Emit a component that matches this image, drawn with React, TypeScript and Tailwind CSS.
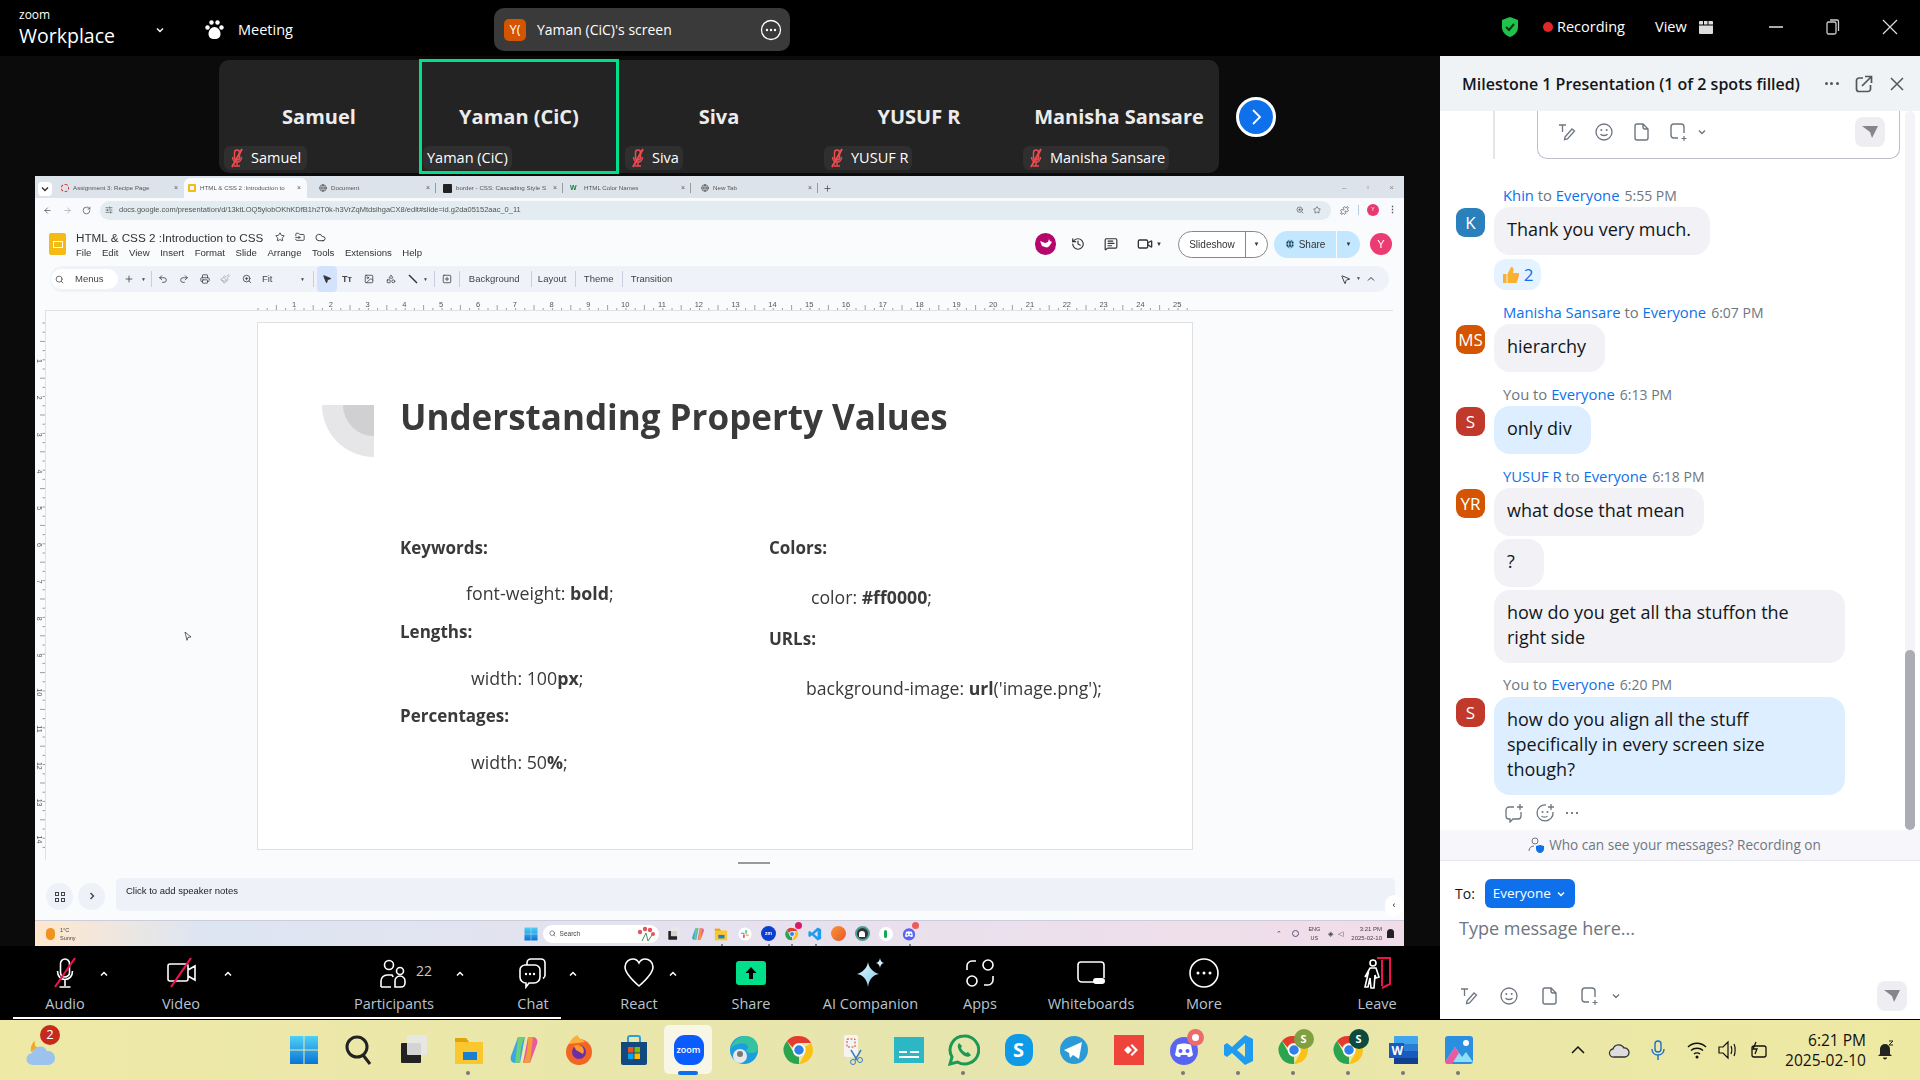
import React from 'react'
import { ArrowLeft, ArrowRight, Cloud, FolderInput, Globe, History, Image, MessageSquareText, MousePointer2, Paintbrush, Plus, Printer, Puzzle, Redo2, RotateCw, Search, Shapes, SlidersHorizontal, SquarePlus, Star, Undo2, Video, ZoomIn } from 'lucide-react'

const ui = 'font-["Open_Sans","Noto_Sans",sans-serif]'

// ---- small drawn icons ----
function Svg({ s, children, vb = '0 0 32 32' }: { s: number; children: React.ReactNode; vb?: string }) {
  return (
    <svg width={s} height={s} viewBox={vb} fill="none" className="shrink-0">
      {children}
    </svg>
  )
}

const Paw = () => (
  <Svg s={22} vb="0 0 22 22">
    <g fill="#fff">
      <circle cx="7.5" cy="3.5" r="2.2" />
      <circle cx="13.5" cy="3.5" r="2.2" />
      <circle cx="3.5" cy="8.5" r="2.2" />
      <circle cx="17.5" cy="8.5" r="2.2" />
      <path d="M10.5 8c3 0 6 3 6 7 0 3-2 5-6 5s-6-2-6-5c0-4 3-7 6-7z" />
    </g>
  </Svg>
)

const Shield = () => (
  <Svg s={22} vb="0 0 22 22">
    <path d="M11 1l8 3v7c0 5-3.5 8.5-8 10-4.5-1.5-8-5-8-10V4z" fill="#1fc24a" />
    <path d="M7 11l3 3 5-6" stroke="#06320f" strokeWidth="2" />
  </Svg>
)

const MutedMic = () => (
  <Svg s={20} vb="0 0 20 20">
    <path d="M10 2a2.5 2.5 0 012.5 2.5v5a2.5 2.5 0 01-5 0v-5A2.5 2.5 0 0110 2zM5.5 9c0 3 2 5 4.5 5s4.5-2 4.5-5M10 14v3.5M7 18h6" stroke="#ef4b4f" strokeWidth="1.5" />
    <path d="M15 1L5 19" stroke="#ef4b4f" strokeWidth="2" />
  </Svg>
)

const TextTool = () => (
  <Svg s={20} vb="0 0 20 20">
    <path d="M2 3h7M5.5 3v7" stroke="#6e7680" strokeWidth="1.3" />
    <path d="M8 15l7-8 2.5 2-7 8-3 .7z" stroke="#6e7680" strokeWidth="1.3" />
  </Svg>
)
const Smile = () => (
  <Svg s={20} vb="0 0 20 20">
    <circle cx="10" cy="10" r="8" stroke="#6e7680" strokeWidth="1.3" />
    <circle cx="7.3" cy="8" r="1" fill="#6e7680" />
    <circle cx="12.7" cy="8" r="1" fill="#6e7680" />
    <path d="M6.5 12c1 2 6 2 7 0" stroke="#6e7680" strokeWidth="1.3" />
  </Svg>
)
const FileIcon = () => (
  <Svg s={20} vb="0 0 20 20">
    <path d="M6 2h6l5 5v9a2 2 0 01-2 2H6a2 2 0 01-2-2V4a2 2 0 012-2zM12 2v3a2 2 0 002 2h3" stroke="#6e7680" strokeWidth="1.4" />
  </Svg>
)
const Snip = () => (
  <Svg s={20} vb="0 0 20 20">
    <path d="M10 16H6a3 3 0 01-3-3V5a3 3 0 013-3h7a3 3 0 013 3v6" stroke="#6e7680" strokeWidth="1.4" />
    <path d="M16 14v5M13.5 16.5h5" stroke="#6e7680" strokeWidth="1.2" />
  </Svg>
)
const Caret = ({ c = '#6e7680' }: { c?: string }) => (
  <Svg s={12} vb="0 0 12 12">
    <path d="M3 4.5L6 7.5l3-3" stroke={c} strokeWidth="1.4" />
  </Svg>
)
const Up = () => (
  <Svg s={12} vb="0 0 12 12">
    <path d="M3 7.5L6 4.5l3 3" stroke="#fff" strokeWidth="1.5" />
  </Svg>
)
const Send = () => (
  <div className="flex h-[30px] w-[30px] items-center justify-center rounded-lg bg-[#eeeef2]">
    <Svg s={18} vb="0 0 18 18">
      <path d="M1 3h16l-6 12-2-6z" fill="#85858c" />
    </Svg>
  </div>
)

function ComposerTools({ gap, caretGap }: { gap: string; caretGap: string }) {
  return (
    <div className={`flex items-center ${gap}`}>
      <TextTool />
      <Smile />
      <FileIcon />
      <div className={`flex items-center ${caretGap}`}>
        <Snip />
        <Caret />
      </div>
    </div>
  )
}

// ---- top bar ----
function TopBar() {
  return (
    <div className={`flex h-14 items-center bg-black pl-[19px] pt-[3px] text-white ${ui}`}>
      <div className="-mt-[3px] flex w-[135px] flex-col">
        <span className="h-[12px] text-[12px] leading-[12px]">zoom</span>
        <span className="mt-[4px] text-[19.5px] leading-[22px]">Workplace</span>
      </div>
      <Caret c="#fff" />
      <div className="ml-[38px] flex w-[290px] items-center gap-[12px] text-[14.5px]">
        <Paw />
        <span>Meeting</span>
      </div>
      <div className="flex h-[43px] w-[296px] items-center rounded-[10px] bg-[#3a3a3a] pl-[10px] text-[14px]">
        <div className="flex h-[22px] w-[22px] items-center justify-center rounded-[5px] bg-[#d45400] text-[13px]">Y(</div>
        <span className="ml-[11px] flex-1 whitespace-nowrap">Yaman (CiC)'s screen</span>
        <Svg s={22} vb="0 0 22 22">
          <circle cx="11" cy="11" r="9.5" stroke="#fff" strokeWidth="1.3" />
          <g fill="#fff">
            <circle cx="7" cy="11" r="1.2" />
            <circle cx="11" cy="11" r="1.2" />
            <circle cx="15" cy="11" r="1.2" />
          </g>
        </Svg>
        <div className="w-2" />
      </div>
      <div className="-mt-[6px] ml-[709px] flex items-center text-[14.5px]">
        <Shield />
        <span className="ml-[22px] h-[10px] w-[10px] rounded-full bg-[#e02828]" />
        <span className="ml-[4px]">Recording</span>
        <span className="ml-[30px]">View</span>
        <div className="ml-[10px]">
          <Svg s={16} vb="0 0 16 16">
            <rect x="2" y="2" width="14" height="13" rx="1" fill="#ddd" />
            <path d="M2 6h14M6.5 2v4M11 2v4" stroke="#000" />
          </Svg>
        </div>
        <span className="ml-[56px] h-[2px] w-[14px] bg-[#aaa]" />
        <div className="ml-[41px]">
          <Svg s={18} vb="0 0 18 18">
            <rect x="3" y="4" width="9" height="12" rx="1.5" stroke="#ccc" strokeWidth="1.3" />
            <path d="M6 2h7a1.5 1.5 0 011.5 1.5V13" stroke="#ccc" strokeWidth="1.3" />
          </Svg>
        </div>
        <div className="ml-[39px]">
          <Svg s={18} vb="0 0 18 18">
            <path d="M2 2l14 14M16 2L2 16" stroke="#ddd" strokeWidth="1.2" />
          </Svg>
        </div>
      </div>
    </div>
  )
}

// ---- gallery ----
function Tile({ name, muted = true, active = false, pill }: { name: string; muted?: boolean; active?: boolean; pill: string }) {
  return (
    <div className={`relative flex w-[200px] justify-center ${active ? 'z-10 -my-px h-[115px] border-[3px] border-[#00e08a] pt-[40px]' : 'h-full pt-[42px]'}`}>
      <span className="text-[20px] font-bold leading-[30px] text-[#ececec]">{name}</span>
      <div className={`absolute flex h-[24px] items-center gap-[4px] rounded-[6px] bg-[#2f2f2f] pr-[4px] text-[14.5px] text-white ${pill}`}>
        {muted && <MutedMic />}
        <span className="whitespace-nowrap">{name}</span>
      </div>
    </div>
  )
}

function Gallery() {
  return (
    <div className={`flex h-[120px] items-start bg-[#0b0b0b] pl-[219px] pt-[4px] ${ui}`}>
      <div className="flex h-[113px] w-[1000px] rounded-[10px] bg-[#232323]">
        <Tile name="Samuel" pill="left-[5px] top-[86px] pl-[3px] pr-[6px]" />
        <Tile name="Yaman (CiC)" muted={false} active pill="left-[1px] top-[84px] px-[4px]" />
        <Tile name="Siva" pill="left-[6px] top-[86px] pl-[3px]" />
        <Tile name="YUSUF R" pill="left-[5px] top-[86px] pl-[3px]" />
        <Tile name="Manisha Sansare" pill="left-[4px] top-[86px] pl-[3px]" />
      </div>
      <div className="ml-[17px] mt-[37px] flex h-10 w-10 items-center justify-center rounded-full border-[3px] border-white bg-[#0e71eb]">
        <Svg s={20} vb="0 0 20 20">
          <path d="M7 3l7 7-7 7" stroke="#fff" strokeWidth="1.8" />
        </Svg>
      </div>
    </div>
  )
}

// ---- the shared browser window ----
function BrowserTab({ title, w, dot, active, sep }: { title: string; w: string; dot: React.ReactNode; active?: boolean; sep?: boolean }) {
  return (
    <div className={`relative flex h-[20px] items-center gap-[4px] pr-[6px] text-[6.2px] text-[#555] ${w} ${active ? 'rounded-t-[6px] bg-[#f8fafd]' : ''}`}>
      {dot}
      <span className="flex-1 overflow-hidden whitespace-nowrap">{title}</span>
      <span className="text-[7px]">×</span>
      {sep && <span className="absolute right-0 top-[5px] h-[10px] w-px bg-[#999]" />}
    </div>
  )
}

function Ruler() {
  const ticks = Array.from({ length: 102 }, (_, i) => i)
  const nums = Array.from({ length: 25 }, (_, i) => i + 1)
  return (
    <svg width="1369" height="16" viewBox="0 0 1369 16" className="block">
      <line x1="10" x2="1358" y1="15.5" y2="15.5" stroke="#dfe1e5" />
      {ticks.map(i => (
        <line key={i} x1={223 + i * 9.2} x2={223 + i * 9.2} y1={i % 4 === 2 ? 10 : 13} y2="15" stroke="#888" strokeWidth=".8" />
      ))}
      {nums.map(n => (
        <text key={n} x={259 + (n - 1) * 36.8} y="11.5" fontSize="7.5" fill="#555" textAnchor="middle" fontFamily="Liberation Sans">
          {n}
        </text>
      ))}
    </svg>
  )
}

function VRuler() {
  const nums = Array.from({ length: 14 }, (_, i) => i + 1)
  return (
    <svg width="13" height="549" viewBox="0 0 13 549" className="block">
      <line x1="10.5" x2="10.5" y1="0" y2="549" stroke="#dfe1e5" />
      {Array.from({ length: 58 }, (_, i) => (
        <line key={i} x1={i % 4 === 2 ? 5 : 7.5} x2="10" y1={12 + i * 9.2} y2={12 + i * 9.2} stroke="#888" strokeWidth=".8" />
      ))}
      {nums.map(n => (
        <text key={n} x="4" y={50 + (n - 1) * 36.8} dy="2.5" fontSize="7" fill="#555" textAnchor="middle" fontFamily="Liberation Sans" transform={`rotate(90 4 ${50 + (n - 1) * 36.8})`}>
          {n}
        </text>
      ))}
    </svg>
  )
}

function SlideLine({ children, pos }: { children: React.ReactNode; pos: string }) {
  return <p className={`absolute whitespace-nowrap leading-[24px] text-[#3a3a3a] ${pos}`}>{children}</p>
}

function Slide() {
  return (
    <div className='relative h-[528px] w-[936px] border border-[#e0e0e0] bg-white font-["Open_Sans",sans-serif]'>
      <div className="absolute left-[64px] top-[82px]">
        <Svg s={52} vb="0 0 52 52">
          <path d="M0 0h52v52A52 52 0 010 0z" fill="#e6e6e8" />
          <path d="M21 0h31v31A31 31 0 0121 0z" fill="#d0d0d2" />
        </Svg>
      </div>
      <h1 className="absolute left-[142px] top-[70px] whitespace-nowrap text-[35px] font-bold leading-[48px] text-[#3a3a3a]">Understanding Property Values</h1>
      <SlideLine pos="left-[142px] top-[213px] text-[17px] font-bold">Keywords:</SlideLine>
      <SlideLine pos="left-[208px] top-[258px] text-[17.8px]">font-weight: <b>bold</b>;</SlideLine>
      <SlideLine pos="left-[142px] top-[297px] text-[17px] font-bold">Lengths:</SlideLine>
      <SlideLine pos="left-[213px] top-[343px] text-[17.8px]">width: 100<b>px</b>;</SlideLine>
      <SlideLine pos="left-[142px] top-[381px] text-[17px] font-bold">Percentages:</SlideLine>
      <SlideLine pos="left-[213px] top-[427px] text-[17.8px]">width: 50<b>%</b>;</SlideLine>
      <SlideLine pos="left-[511px] top-[213px] text-[17px] font-bold">Colors:</SlideLine>
      <SlideLine pos="left-[553px] top-[262px] text-[17.7px]">color: <b>#ff0000</b>;</SlideLine>
      <SlideLine pos="left-[511px] top-[304px] text-[17px] font-bold">URLs:</SlideLine>
      <SlideLine pos="left-[548px] top-[353px] text-[17.6px]">background-image: <b>url</b>('image.png');</SlideLine>
    </div>
  )
}

const Sep = ({ ml }: { ml: string }) => <span className={`h-[16px] w-px bg-[#ccd] ${ml}`} />
const Tri = ({ ml }: { ml: string }) => <span className={`text-[5px] leading-none ${ml}`}>▼</span>

function SlidesToolbar() {
  const ic = 'h-[10px] w-[10px] shrink-0'
  return (
    <div className="mx-[15px] mt-px flex h-[26px] items-center rounded-full bg-[#eff3f9] pl-px text-[9.5px] text-[#444]">
      <div className="flex h-[20px] w-[67px] items-center rounded-full bg-white pl-[4px]">
        <Search className="h-[9px] w-[9px]" />
        <span className="ml-[11px]">Menus</span>
      </div>
      <Plus className={`ml-[6px] ${ic}`} />
      <Tri ml="ml-[7px]" />
      <Sep ml="ml-[5px]" />
      <Undo2 className={`ml-[6px] ${ic}`} />
      <Redo2 className={`ml-[11px] ${ic}`} />
      <Printer className={`ml-[11px] ${ic}`} />
      <Paintbrush className={`ml-[10px] ${ic} text-[#aaa]`} />
      <ZoomIn className={`ml-[12px] ${ic}`} />
      <span className="ml-[10px] w-[36px]">Fit</span>
      <Tri ml="ml-[2px]" />
      <Sep ml="ml-[8px]" />
      <div className="ml-[3px] flex h-[26px] w-[20px] items-center justify-center rounded-[4px] bg-[#d3e3fd]">
        <MousePointer2 className="h-[10px] w-[10px] fill-[#333] text-[#333]" />
      </div>
      <span className="ml-[5px] w-[10px] text-[9px] font-bold leading-none">Tт</span>
      <Image className={`ml-[12px] ${ic}`} />
      <Shapes className={`ml-[12px] ${ic}`} />
      <span className="ml-[12px]">
        <Svg s={10} vb="0 0 10 10">
          <path d="M1 1l8 8" stroke="#333" strokeWidth="1.5" />
        </Svg>
      </span>
      <Tri ml="ml-[5px]" />
      <Sep ml="ml-[6px]" />
      <SquarePlus className={`ml-[7px] ${ic}`} />
      <Sep ml="ml-[7px]" />
      <span className="ml-[9px] w-[52px] whitespace-nowrap">Background</span>
      <Sep ml="ml-[10px]" />
      <span className="ml-[6px] w-[30px]">Layout</span>
      <Sep ml="ml-[7px]" />
      <span className="ml-[8px] w-[29px]">Theme</span>
      <Sep ml="ml-[9px]" />
      <span className="ml-[8px]">Transition</span>
      <div className="ml-auto mr-[13px] flex items-center gap-[5px]">
        <MousePointer2 className="h-[11px] w-[11px] text-[#333]" />
        <span className="text-[5px]">▼</span>
        <Svg s={10} vb="0 0 10 10">
          <path d="M2 6.5L5 3.5l3 3" stroke="#333" />
        </Svg>
      </div>
    </div>
  )
}

function Screen() {
  const lib = 'font-["Liberation_Sans",sans-serif]'
  return (
    <div className={`flex h-[770px] w-[1369px] flex-col overflow-hidden bg-[#f9fbfd] blur-[0.3px] ${lib}`}>
      {/* tabs */}
      <div className="flex h-[22px] items-end bg-[#dde3ea] pl-[3px]">
        <div className="mb-[2px] mr-[9px] flex h-[14px] w-[14px] items-center justify-center rounded-[4px] bg-white">
          <Caret c="#333" />
        </div>
        <BrowserTab title="Assignment 3: Recipe Page" w="w-[123px]" dot={<span className="h-[8px] w-[8px] rounded-full border border-dashed border-[#d93025]" />} />
        <BrowserTab title="HTML & CSS 2 :Introduction to" w="w-[123px] pl-[4px]" active dot={<span className="h-[8px] w-[8px] rounded-[1px] border-2 border-[#f5ba15]" />} />
        <BrowserTab title="Document" w="w-[129px] pl-[12px]" sep dot={<Globe className="h-[8px] w-[8px] shrink-0 text-[#444]" />} />
        <BrowserTab title="border - CSS: Cascading Style S" w="w-[127px] pl-[7px]" sep dot={<span className="h-[9px] w-[9px] rounded-[1px] bg-[#222]" />} />
        <BrowserTab title="HTML Color Names" w="w-[128px] pl-[7px]" sep dot={<span className="w-[10px] text-[7px] font-bold text-[#16803c]">W</span>} />
        <BrowserTab title="New Tab" w="w-[127px] pl-[10px]" sep dot={<Globe className="h-[8px] w-[8px] shrink-0 text-[#444]" />} />
        <Plus className="mb-[5px] ml-[5px] h-[9px] w-[9px] text-[#444]" />
        <div className="mb-[6px] ml-auto mr-[10px] flex gap-[20px] text-[8px] leading-none text-[#888]">
          <span>–</span>
          <span>▫</span>
          <span>×</span>
        </div>
      </div>
      {/* address bar */}
      <div className="flex h-[24px] items-center bg-[#f8fafd] text-[#555]">
        <ArrowLeft className="ml-[8px] h-[9px] w-[9px]" />
        <ArrowRight className="ml-[11px] h-[9px] w-[9px] text-[#aaa]" />
        <RotateCw className="ml-[10px] h-[9px] w-[9px]" />
        <div className="ml-[9px] flex h-[19px] w-[1231px] items-center rounded-full bg-[#e2ecf1] pl-[5px] text-[7.5px]">
          <SlidersHorizontal className="mr-[6px] h-[8px] w-[8px]" />
          docs.google.com/presentation/d/13ktLOQ5ylobOKhKDfB1h2T0k-h3VrZqMtdsihgaCX8/edit#slide=id.g2da05152aac_0_11
          <span className="ml-auto mr-[10px] flex items-center gap-[9px]">
            <ZoomIn className="h-[8px] w-[8px]" />
            <Star className="h-[8px] w-[8px]" />
          </span>
        </div>
        <Puzzle className="ml-[9px] h-[9px] w-[9px]" />
        <span className="ml-[9px] h-[10px] w-px bg-[#bcd]" />
        <span className="ml-[8px] flex h-[12px] w-[12px] items-center justify-center rounded-full bg-[#e8386f] text-[5px] text-white">Y</span>
        <span className="ml-[9px] text-[9px] font-bold leading-none">⋮</span>
      </div>
      {/* docs header */}
      <div className="flex h-[43px] items-center pl-[14px] pt-[1px] text-[#333]">
        <div className="flex h-[22px] w-[17px] items-center justify-center rounded-[2px] bg-[#f5ba15]">
          <div className="h-[7px] w-[10px] border border-white" />
        </div>
        <div className="ml-[10px] flex flex-col">
          <div className="flex items-center text-[11.7px] leading-[15px]">
            HTML &amp; CSS 2 :Introduction to CSS
            <Star className="ml-[12px] h-[10px] w-[10px]" />
            <FolderInput className="ml-[10px] h-[10px] w-[10px]" />
            <Cloud className="ml-[10px] h-[11px] w-[11px]" />
          </div>
          <div className="mt-[2px] flex gap-[10.5px] text-[9.6px] leading-[12px]">
            {['File', 'Edit', 'View', 'Insert', 'Format', 'Slide', 'Arrange', 'Tools', 'Extensions', 'Help'].map(m => (
              <span key={m}>{m}</span>
            ))}
          </div>
        </div>
        <div className="ml-auto flex items-center">
          <span className="flex h-[22px] w-[21px] items-center justify-center rounded-full bg-[#b5076b]">
            <Svg s={14} vb="0 0 14 14">
              <path d="M1 4l5 2 3-1 1-3 1 2 2 1-2 3c-1 2-3 3-5 2L3 9z" fill="#fff" />
            </Svg>
          </span>
          <History className="ml-[15px] h-[14px] w-[14px]" />
          <MessageSquareText className="ml-[19px] h-[14px] w-[14px]" />
          <div className="ml-[19px] flex items-center gap-[3px]">
            <Video className="h-[16px] w-[16px]" />
            <span className="text-[6px] text-[#333]">▼</span>
          </div>
          <div className="ml-[16px] flex h-[27px] w-[90px] items-center rounded-full border border-[#888] bg-white text-[10px]">
            <span className="w-[66px] text-center">Slideshow</span>
            <span className="flex h-full flex-1 items-center justify-center border-l border-[#888] text-[6px]">▼</span>
          </div>
          <div className="ml-[6px] flex h-[27px] w-[86px] items-center rounded-full bg-[#c2e7ff] text-[10px]">
            <span className="flex h-full w-[63px] items-center justify-center gap-[4px] border-r border-[#f8fafd]">
              <Globe className="h-[10px] w-[10px] fill-[#0b3a58] text-[#c2e7ff]" />
              Share
            </span>
            <span className="flex-1 text-center text-[6px]">▼</span>
          </div>
          <span className="ml-[10px] mr-[12px] flex h-[22px] w-[22px] items-center justify-center rounded-full bg-[#ec3a72] text-[11px] text-white">Y</span>
        </div>
      </div>
      <SlidesToolbar />
      <div className="mt-[3px]">
        <Ruler />
      </div>
      {/* canvas */}
      <div className="relative flex h-[553px]">
        <VRuler />
        <div className="ml-[209px] mt-[11px]">
          <Slide />
        </div>
        <div className="absolute left-[149px] top-[321px]">
          <Svg s={10} vb="0 0 10 10">
            <path d="M1 0l6 5-3 .3-1 3z" fill="#fff" stroke="#222" strokeWidth=".7" />
          </Svg>
        </div>
        <div className="absolute bottom-0 left-[703px] h-[2px] w-[32px] bg-[#999]" />
      </div>
      {/* notes */}
      <div className="mt-[14px] flex h-[33px] items-start pl-[11px]">
        <span className="mt-[5px] flex h-[27px] w-[27px] items-center justify-center rounded-full bg-[#eff1f8]">
          <span className="grid grid-cols-2 gap-[2px]">
            {[0, 1, 2, 3].map(i => (
              <span key={i} className="h-[4px] w-[4px] border border-[#444]" />
            ))}
          </span>
        </span>
        <span className="ml-[5px] mt-[5px] flex h-[27px] w-[27px] -rotate-90 items-center justify-center rounded-full bg-[#eff1f8]">
          <Caret c="#444" />
        </span>
        <div className="relative ml-[11px] h-[33px] w-[1279px] rounded-[5px] bg-[#eff1f8] pl-[10px] pt-[6px] text-[9.5px] text-[#222]">
          Click to add speaker notes
          <span className="absolute -right-[8px] top-[17px] flex h-[22px] w-[18px] items-center justify-center rounded-full bg-white text-[9px]">‹</span>
        </div>
      </div>
      <MiniTaskbar />
    </div>
  )
}

const Mini = ({ children, dot }: { children: React.ReactNode; dot?: boolean }) => (
  <div className="relative flex h-[24px] w-[23.5px] items-center justify-center">
    {children}
    {dot && <span className="absolute bottom-0 left-[11px] h-[2px] w-[2px] rounded-full bg-[#666]" />}
  </div>
)

function MiniTaskbar() {
  return (
    <div className="mt-auto flex h-[26px] items-center border-t border-[#ccd] bg-gradient-to-r from-[#ffe8cc] from-[0%] via-[#dde5f2] via-[12%] to-[#f1dde9] text-[#444]">
      <span className="ml-[11px] h-[12px] w-[9px] rounded-full bg-[#f0921e]" />
      <div className="ml-[5px] flex flex-col text-[5.5px] leading-[8px]">
        <span>1°C</span>
        <span>Sunny</span>
      </div>
      <div className="ml-[448px] flex items-center">
        <WinStart s={14} />
        <div className="ml-[5px] flex h-[18px] w-[116px] items-center rounded-full bg-white pl-[6px] text-[6.5px]">
          <Search className="mr-[4px] h-[7px] w-[7px]" />
          Search
          <span className="ml-auto mr-[3px]">
            <Svg s={20} vb="0 0 20 20">
              <g fill="#e0555f">
                <circle cx="4" cy="8" r="2.2" />
                <circle cx="9" cy="5" r="2.2" />
                <circle cx="14" cy="6" r="2.2" />
                <circle cx="17" cy="10" r="2" />
              </g>
              <path d="M6 17l4-8M12 17l-2-8M12 17l4-6" stroke="#4a8f50" />
            </Svg>
          </span>
        </div>
        <div className="ml-[4px] flex items-center">
          <Mini><TaskView s={14} /></Mini>
          <Mini><Copilot s={14} /></Mini>
          <Mini dot><Explorer s={14} /></Mini>
          <Mini>
            <Svg s={14}>
              <circle cx="16" cy="16" r="15" fill="#fff" />
              <rect x="7" y="13" width="8" height="3" fill="#36c5f0" />
              <rect x="17" y="7" width="3" height="8" fill="#2eb67d" />
              <rect x="17" y="17" width="8" height="3" fill="#ecb22e" />
              <rect x="12" y="17" width="3" height="8" fill="#e01e5a" />
            </Svg>
          </Mini>
          <Mini dot><span className="flex h-[15px] w-[15px] items-center justify-center rounded-full bg-[#0b3fd1] text-[5px] font-bold text-white">zm</span></Mini>
          <Mini dot>
            <Chrome s={14} />
            <span className="absolute right-[2px] top-0 h-[7px] w-[7px] rounded-full bg-[#d81b60]" />
          </Mini>
          <Mini dot><VSCode s={14} /></Mini>
          <Mini><span className="h-[15px] w-[15px] rounded-full bg-gradient-to-br from-[#f7953a] to-[#e9532a]" /></Mini>
          <Mini><span className="flex h-[15px] w-[15px] items-center justify-center rounded-full border-2 border-[#4da19c] bg-[#333]"><span className="h-[6px] w-[6px] rounded-t-full bg-white" /></span></Mini>
          <Mini><span className="flex h-[14px] w-[14px] items-center justify-center rounded-full bg-white"><span className="h-[8px] w-[3px] rounded-full bg-[#13aa52]" /></span></Mini>
          <Mini dot>
            <Discord s={14} />
            <span className="absolute right-[2px] top-0 h-[7px] w-[7px] rounded-full bg-[#ef5a5a]" />
          </Mini>
        </div>
      </div>
      <div className="ml-auto flex items-center text-[6px] leading-[9px]">
        <span className="text-[7px]">⌃</span>
        <span className="ml-[10px] h-[7px] w-[7px] rounded-full border border-[#557]" />
        <span className="ml-[9px] flex flex-col text-center text-[5.5px]">
          <span>ENG</span>
          <span>US</span>
        </span>
        <span className="ml-[8px] text-[7px]">◈</span>
        <span className="ml-[5px] text-[7px]">◁</span>
        <span className="ml-[8px] flex flex-col items-end whitespace-nowrap">
          <span>3:21 PM</span>
          <span>2025-02-10</span>
        </span>
        <span className="ml-[5px] mr-[10px] h-[9px] w-[7px] rounded-t-full bg-[#222]" />
      </div>
    </div>
  )
}

const WinStart = ({ s }: { s: number }) => (
  <Svg s={s} vb="0 0 30 30">
    <defs>
      <linearGradient id="wg" x1="0" y1="0" x2="0" y2="1">
        <stop stopColor="#4fd1f5" />
        <stop offset="1" stopColor="#0a74d6" />
      </linearGradient>
    </defs>
    <path d="M1 1h13.5v13.5H1zM15.5 1H29v13.5H15.5zM1 15.5h13.5V29H1zM15.5 15.5H29V29H15.5z" fill="url(#wg)" />
  </Svg>
)

// ---- meeting toolbar ----
function ToolItem({ label, w, children, caret }: { label: string; w: string; children: React.ReactNode; caret?: string }) {
  return (
    <div className={`relative flex flex-col items-center ${w}`}>
      <div className="flex h-[32px] items-center">{children}</div>
      <span className="mt-[5px] whitespace-nowrap text-[14.5px] font-medium leading-[20px] text-[#b9c4d0]">{label}</span>
      {caret && (
        <span className={`absolute top-[11px] ${caret}`}>
          <Up />
        </span>
      )}
    </div>
  )
}

const W = { stroke: '#fff', strokeWidth: 1.6 }

function Toolbar() {
  return (
    <div className={`relative flex h-[73px] items-start bg-black pt-[11px] ${ui}`}>
      <ToolItem label="Audio" w="w-[130px]" caret="left-[98px]">
        <Svg s={32}>
          <path d="M16 2a4.5 4.5 0 014.5 4.5v9a4.5 4.5 0 01-9 0v-9A4.5 4.5 0 0116 2zM8.5 14c0 5 3 8.5 7.5 8.5s7.5-3.5 7.5-8.5M16 22.5V29M10.5 30h11" {...W} />
          <path d="M26 1L6 30" stroke="#f0124f" strokeWidth="2.2" />
        </Svg>
      </ToolItem>
      <ToolItem label="Video" w="w-[102px]" caret="left-[92px]">
        <Svg s={32}>
          <path d="M21 24H5a2 2 0 01-2-2V9a2 2 0 012-2h16a2 2 0 012 2v13a2 2 0 01-2 2zM23 13l7-4v14l-7-4" {...W} />
          <path d="M26 1L6 30" stroke="#f0124f" strokeWidth="2.2" />
        </Svg>
      </ToolItem>
      <div className="w-[88px]" />
      <ToolItem label="Participants" w="w-[148px]" caret="left-[134px]">
        <Svg s={32}>
          <circle cx="11" cy="8" r="4.5" {...W} />
          <circle cx="22" cy="14" r="3.5" {...W} />
          <path d="M3 30v-6a6 6 0 016-6h5a6 6 0 011 2M17 30v-6a5 5 0 0110 0v2a4 4 0 01-4 4zM3 30h10" {...W} />
        </Svg>
        <span className="absolute left-[96px] top-[4px] text-[14px] leading-[20px] text-[#c8c8c8]">22</span>
      </ToolItem>
      <div className="w-[33px]" />
      <ToolItem label="Chat" w="w-[64px]" caret="left-[66px]">
        <Svg s={32}>
          <path d="M10 8V6a4 4 0 014-4h10a4 4 0 014 4v12a4 4 0 01-2 3.5" {...W} />
          <path d="M7 8h11a5 5 0 015 5v7a6 6 0 01-6 6h-5l-3 4v-4a6 6 0 01-6-6v-7a5 5 0 015-5z" {...W} />
          <g fill="#fff">
            <circle cx="9" cy="17" r="1.2" />
            <circle cx="13" cy="17" r="1.2" />
            <circle cx="17" cy="17" r="1.2" />
          </g>
        </Svg>
      </ToolItem>
      <div className="w-[42px]" />
      <ToolItem label="React" w="w-[64px]" caret="left-[60px]">
        <Svg s={32}>
          <path d="M16 29C8 22 2 16 2 10c0-5 4-8 8-8 3 0 5 2 6 4 1-2 3-4 6-4 4 0 8 3 8 8 0 6-6 12-14 19z" {...W} />
        </Svg>
      </ToolItem>
      <div className="w-[48px]" />
      <ToolItem label="Share" w="w-[64px]">
        <div className="flex h-[24px] w-[30px] items-center justify-center rounded-[3px] bg-[#00e08a]">
          <Svg s={16} vb="0 0 16 16">
            <path d="M8 2l5.5 6H10v6H6V8H2.5z" fill="#000" />
          </Svg>
        </div>
      </ToolItem>
      <div className="w-[30px]" />
      <ToolItem label="AI Companion" w="w-[115px]">
        <Svg s={32}>
          <defs>
            <linearGradient id="ai" x1="0" y1="0" x2="1" y2="1">
              <stop stopColor="#e9fbff" />
              <stop offset="1" stopColor="#7fc9e8" />
            </linearGradient>
          </defs>
          <path d="M13 5c1 6 5 10 11 12-6 1-10 5-11 13-1-8-5-12-11-13 6-2 10-6 11-12z" fill="url(#ai)" />
          <path d="M25 1c.4 3 2 4.5 4 5-2 .5-3.6 2-4 5-.4-3-2-4.5-4-5 2-.5 3.6-2 4-5z" fill="#cfeffa" />
        </Svg>
      </ToolItem>
      <div className="w-[2px]" />
      <ToolItem label="Apps" w="w-[100px]">
        <Svg s={32}>
          <path d="M3 13V9a5 5 0 015-5h4M29 19v4a5 5 0 01-5 5h-4" {...W} />
          <circle cx="24" cy="8" r="5" {...W} />
          <circle cx="8" cy="24" r="5" {...W} />
        </Svg>
      </ToolItem>
      <div className="w-[11px]" />
      <ToolItem label="Whiteboards" w="w-[100px]">
        <Svg s={32}>
          <path d="M20 25H7a4 4 0 01-4-4V8a3 3 0 013-3h20a3 3 0 013 3v13" {...W} />
          <rect x="18" y="21" width="12" height="6" rx="3" fill="#fff" />
        </Svg>
      </ToolItem>
      <div className="w-[13px]" />
      <ToolItem label="More" w="w-[100px]">
        <Svg s={32}>
          <circle cx="16" cy="16" r="14" {...W} />
          <g fill="#fff">
            <circle cx="10" cy="16" r="1.5" />
            <circle cx="16" cy="16" r="1.5" />
            <circle cx="22" cy="16" r="1.5" />
          </g>
        </Svg>
      </ToolItem>
      <div className="w-[73px]" />
      <ToolItem label="Leave" w="w-[100px]">
        <Svg s={32}>
          <circle cx="12" cy="6" r="3" {...W} />
          <path d="M9 11h6l3 9-3 1-1-3-1 13h-3l-1-10-2 9H4l3-13-3 3z" {...W} />
          <path d="M16 1h13v26l-8 4" stroke="#f0124f" strokeWidth="2" />
          <path d="M21 3v26" stroke="#f0124f" strokeWidth="2" />
        </Svg>
      </ToolItem>
      <div className="absolute bottom-0 left-[13px] h-[2px] w-[548px] bg-white" />
    </div>
  )
}

// ---- chat panel ----
function Label({ who, to = ' to ', time, you, mt }: { who: string; to?: string; time: string; you?: boolean; mt: string }) {
  return (
    <div className={`ml-[63px] h-[20px] whitespace-nowrap text-[14.8px] leading-[18px] ${mt}`}>
      <span className={you ? 'text-[#6e7680]' : 'text-[#0e71eb]'}>{who}</span>
      <span className="text-[#6e7680]">{to}</span>
      <span className="text-[#0e71eb]">Everyone</span>
      <span className="ml-[5px] text-[14px] text-[#6e7680]">{time}</span>
    </div>
  )
}

function Bubble({ children, blue, mt, w }: { children: React.ReactNode; blue?: boolean; mt: string; w?: string }) {
  return (
    <div className={`ml-[54px] ${mt} ${w ?? 'w-fit'} min-w-[50px] rounded-[16px] pb-[13px] pl-[13px] pr-[19px] pt-[10px] text-[18px] leading-[25px] text-[#131619] ${blue ? 'bg-[#dceeff]' : 'bg-[#f1f1f6]'}`}>
      {children}
    </div>
  )
}

function Avatar({ text, c, top }: { text: string; c: string; top: string }) {
  return (
    <div className={`absolute left-[16px] ${top} flex h-[29px] w-[29px] items-center justify-center rounded-[9px] text-[17px] text-white`} style={{ background: c }}>
      {text}
    </div>
  )
}

function Chat() {
  return (
    <div className={`flex h-[963px] w-[480px] flex-col bg-white ${ui}`}>
      <div className="flex h-[55px] shrink-0 items-center bg-[#f0f3f6] pl-[22px] text-[#131619]">
        <span className="whitespace-nowrap text-[16px] font-semibold">Milestone 1 Presentation (1 of 2 spots filled)</span>
        <span className="ml-[25px] flex gap-[2.5px]">
          <i className="h-[3px] w-[3px] rounded-full bg-[#555]" />
          <i className="h-[3px] w-[3px] rounded-full bg-[#555]" />
          <i className="h-[3px] w-[3px] rounded-full bg-[#555]" />
        </span>
        <div className="ml-[16px]">
          <Svg s={18} vb="0 0 18 18">
            <path d="M8 3H4a2.5 2.5 0 00-2.5 2.5v8.500A2.5 2.5 0 004 16.5h9a2.5 2.5 0 002.5-2.5v-4M7 11l9-9M10 1.5h6.5V8" stroke="#555" strokeWidth="1.7" />
          </Svg>
        </div>
        <div className="ml-[16px]">
          <Svg s={16} vb="0 0 16 16">
            <path d="M2 2l12 12M14 2L2 14" stroke="#555" strokeWidth="1.5" />
          </Svg>
        </div>
      </div>
      <div className="relative h-[719px] shrink-0 overflow-hidden">
        {/* scrollbar */}
        <div className="absolute right-[5px] top-0 h-full w-[10px] rounded-full bg-[#f3f3f8]">
          <div className="absolute bottom-0 h-[180px] w-full rounded-full bg-[#acacb5]" />
        </div>
        {/* tail of the thread reply composer */}
        <div className="flex h-[48px]">
          <div className="ml-[53px] w-[2px] bg-[#e4e5ea]" />
          <div className="ml-[42px] flex w-[363px] items-center justify-between rounded-b-[10px] border border-t-0 border-[#bdbdcb] pb-[6px] pl-[19px] pr-[14px]">
            <ComposerTools gap="gap-[17px]" caretGap="gap-[8px]" />
            <Send />
          </div>
        </div>
        <Label who="Khin" time="5:55 PM" mt="mt-[27px]" />
        <Avatar text="K" c="#2a80bb" top="top-[97px]" />
        <Bubble mt="mt-[1px]">Thank you very much.</Bubble>
        <div className="ml-[54px] mt-[4px] flex h-[31px] w-[47px] items-center justify-center gap-[4px] rounded-[12px] bg-[#e5f2ff] text-[17px] text-[#0e71eb]">
          <Svg s={18} vb="0 0 18 18">
            <path d="M1 8h3.5v9H1zM5.5 8L9 1c2 0 3 1.5 2.5 3L11 7h5c1 0 1.5 1 1 2l-2 7c-.3 1-1 1-2 1H5.5z" fill="#fbb02e" />
          </Svg>
          2
        </div>
        <Label who="Manisha Sansare" time="6:07 PM" mt="mt-[13px]" />
        <Avatar text="MS" c="#d45400" top="top-[214px]" />
        <Bubble mt="mt-[1px]">hierarchy</Bubble>
        <Label who="You" time="6:13 PM" you mt="mt-[13px]" />
        <Avatar text="S" c="#c0392b" top="top-[296px]" />
        <Bubble blue mt="mt-[1px]">only div</Bubble>
        <Label who="YUSUF R" time="6:18 PM" mt="mt-[13px]" />
        <Avatar text="YR" c="#d45400" top="top-[378px]" />
        <Bubble mt="mt-[1px]">what dose that mean</Bubble>
        <Bubble mt="mt-[3px]">?</Bubble>
        <Bubble mt="mt-[3px]" w="w-[351px]">
          how do you get all tha stuffon the
          <br />
          right side
        </Bubble>
        <Label who="You" time="6:20 PM" you mt="mt-[12px]" />
        <Avatar text="S" c="#c0392b" top="top-[587px]" />
        <Bubble blue mt="mt-[2px]" w="w-[351px]">
          how do you align all the stuff
          <br />
          specifically in every screen size
          <br />
          though?
        </Bubble>
        <div className="ml-[64px] mt-[8px] flex items-center gap-[11px]">
          <Svg s={20} vb="0 0 20 20">
            <path d="M10 4H5a3 3 0 00-3 3v6a3 3 0 003 3h1v3l3-3h5a3 3 0 003-3V9M13 4h6M16 1v6" stroke="#6e7680" strokeWidth="1.3" />
          </Svg>
          <Svg s={20} vb="0 0 20 20">
            <path d="M11 2a8 8 0 107 7M16 1v6M13 4h6" stroke="#6e7680" strokeWidth="1.3" />
            <circle cx="7.5" cy="9" r="1" fill="#6e7680" />
            <circle cx="12.5" cy="9" r="1" fill="#6e7680" />
            <path d="M6.5 13c1 1.5 5 1.5 6 0" stroke="#6e7680" strokeWidth="1.3" />
          </Svg>
          <span className="flex gap-[3px]">
            <i className="h-[2px] w-[2px] rounded-full bg-[#555]" />
            <i className="h-[2px] w-[2px] rounded-full bg-[#555]" />
            <i className="h-[2px] w-[2px] rounded-full bg-[#555]" />
          </span>
        </div>
      </div>
      <div className="flex h-[31px] shrink-0 items-center justify-center gap-[4px] border-b border-[#e8e9f0] bg-[#f7f7fb] pr-[12px] text-[13.6px] text-[#6e7680]">
        <Svg s={18} vb="0 0 18 18">
          <circle cx="8" cy="5" r="3" stroke="#6e7680" />
          <path d="M2 15c0-3 2-5 5-5" stroke="#6e7680" />
          <path d="M9 10l4-1 4 1v3c0 2-2 4-4 4s-4-2-4-4z" fill="#0e71eb" />
        </Svg>
        Who can see your messages? Recording on
      </div>
      <div className="flex items-center pl-[15px] pt-[18px] text-[14px] text-[#131619]">
        To:
        <span className="ml-[10px] flex h-[29px] w-[90px] items-center justify-center gap-[4px] rounded-[6px] bg-[#0e71eb] text-[13.5px] text-white">
          Everyone
          <Caret c="#fff" />
        </span>
      </div>
      <div className="pl-[19px] pt-[6px] text-[18px] leading-[28px] text-[#6e7680]">Type message here...</div>
      <div className="mt-auto flex items-center justify-between pb-[8px] pl-[19px] pr-[13px]">
        <ComposerTools gap="gap-[20px]" caretGap="gap-[11px]" />
        <Send />
      </div>
    </div>
  )
}

// ---- windows taskbar ----
function Chrome({ s = 32 }: { s?: number }) {
  return (
    <Svg s={s}>
      <path d="M16 2a14 14 0 0112.1 7H16a7 7 0 00-6.5 4.5L4 7A14 14 0 0116 2z" fill="#e33b2e" />
      <path d="M28.1 9a14 14 0 01-12 21l6-10.5A7 7 0 0022 13z" fill="#fbc116" />
      <path d="M16.1 30A14 14 0 014 7l6 10.5A7 7 0 0016 23z" fill="#2aa44f" />
      <circle cx="16" cy="16" r="5.5" fill="#2f7fe8" stroke="#fff" strokeWidth="1.5" />
    </Svg>
  )
}

function TaskView({ s = 32 }: { s?: number }) {
  return (
    <Svg s={s}>
      <rect x="3" y="9" width="20" height="20" rx="1" fill="#222" />
      <rect x="9" y="1" width="20" height="20" rx="1" fill="#e8e8e8" opacity=".9" />
    </Svg>
  )
}

function Explorer({ s = 32 }: { s?: number }) {
  return (
    <Svg s={s}>
      <path d="M2 4h11l3 4h14v22H2z" fill="#fbc72e" />
      <path d="M2 4h11l3 4H2z" fill="#e2a20c" />
      <rect x="10" y="18" width="14" height="8" fill="#1a7fd0" />
    </Svg>
  )
}

function Copilot({ s = 32 }: { s?: number }) {
  return (
    <Svg s={s}>
      <path d="M10 3h7l-5 26H7c-4 0-5-4-4-7z" fill="#3aa5e8" />
      <path d="M10 3h7c-3 4-5 14-5 26H7z" fill="#6ccf7a" />
      <path d="M22 29h-7l5-26h5c4 0 5 4 4 7z" fill="#e85ba0" />
      <path d="M22 29h-7c3-4 5-14 5-26h5z" fill="#f59a3a" />
    </Svg>
  )
}

function VSCode({ s = 32 }: { s?: number }) {
  return (
    <Svg s={s}>
      <path d="M22 1l8 4v22l-8 4L9 19l-5 4-3-2V11l3-2 5 4zM22 9l-8 7 8 7z" fill="#1f9cf0" />
    </Svg>
  )
}

function Discord({ s = 32 }: { s?: number }) {
  return (
    <Svg s={s}>
      <circle cx="16" cy="17" r="14" fill="#5865f2" />
      <path d="M9 11c4-2 10-2 14 0l2 10c-2 2-4 2-5 2l-1-2H13l-1 2c-1 0-3 0-5-2z" fill="#fff" />
      <circle cx="12.5" cy="17" r="2" fill="#5865f2" />
      <circle cx="19.5" cy="17" r="2" fill="#5865f2" />
    </Svg>
  )
}

function Dock({ children, dot, active }: { children: React.ReactNode; dot?: boolean; active?: boolean }) {
  return (
    <div className="relative flex h-[60px] w-[55px] items-center justify-center">
      {active && <div className="absolute left-[3px] top-[5px] h-[49px] w-[48px] rounded-[5px] bg-[#f8f6e6]" />}
      <div className="relative">{children}</div>
      {dot && <span className="absolute bottom-[5px] left-[25px] h-[4px] w-[4px] rounded-full bg-[#777]" />}
      {active && <span className="absolute bottom-[5px] left-[17px] h-[4px] w-[20px] rounded-full bg-[#0e71eb]" />}
    </div>
  )
}

function Taskbar() {
  return (
    <div className={`relative flex h-[60px] items-center bg-gradient-to-r from-[#efe9a6] via-[#e6e5ae] to-[#eee9a2] ${ui}`}>
      <div className="relative ml-[25px] mt-[4px] w-[251px]">
        <Svg s={32}>
          <path d="M6 16C5 10 8 6 10 5c-1 4 1 6 3 7z" fill="#f4a81d" />
          <path d="M8 29a6 6 0 01-1-12 8 8 0 0115-2 7 7 0 012 14z" fill="#9cc3ee" />
        </Svg>
        <span className="absolute -top-[11px] left-[15px] flex h-[20px] w-[20px] items-center justify-center rounded-full bg-[#c42b1c] text-[13px] text-white">2</span>
      </div>
      <Dock><WinStart s={30} /></Dock>
      <Dock>
        <Svg s={32}>
          <circle cx="14" cy="13" r="10" stroke="#222" strokeWidth="3" />
          <path d="M20 21l7 9" stroke="#222" strokeWidth="3" />
        </Svg>
      </Dock>
      <Dock><TaskView /></Dock>
      <Dock dot><Explorer /></Dock>
      <Dock><Copilot /></Dock>
      <Dock>
        <Svg s={32}>
          <circle cx="16" cy="18" r="13" fill="#f26522" />
          <path d="M6 10c2-5 5-8 9-9 0 4 4 3 7 7z" fill="#fbb03b" />
          <circle cx="16" cy="18" r="7" fill="#6b2fa8" />
          <path d="M11 12c6-3 12 2 9 8l-7-4z" fill="#ff9a2e" />
        </Svg>
      </Dock>
      <Dock>
        <Svg s={32}>
          <path d="M10 8V4a2 2 0 012-2h8a2 2 0 012 2v4" stroke="#2b9fd8" strokeWidth="2" />
          <path d="M3 8h26v21a2 2 0 01-2 2H5a2 2 0 01-2-2z" fill="#124a80" />
          <rect x="10" y="13" width="5.5" height="5.5" fill="#f25022" />
          <rect x="16.5" y="13" width="5.5" height="5.5" fill="#7fba00" />
          <rect x="10" y="19.5" width="5.5" height="5.5" fill="#00a4ef" />
          <rect x="16.5" y="19.5" width="5.5" height="5.5" fill="#ffb900" />
        </Svg>
      </Dock>
      <Dock active>
        <div className="flex h-[30px] w-[30px] items-center justify-center rounded-[11px] bg-[#0b5cff] text-[9px] font-semibold text-white">zoom</div>
      </Dock>
      <Dock>
        <Svg s={32}>
          <circle cx="16" cy="16" r="14" fill="#1b9de2" />
          <path d="M3 14C5 6 12 2 18 2c7 0 12 5 12 12 0 3-3 5-7 5-3 0-5-1-5-3 2-1 3-3 1-5-4-3-12-1-16 3z" fill="#35c2a0" />
          <circle cx="12" cy="22" r="7" fill="#e8e8e8" />
          <circle cx="12" cy="20" r="3" fill="#777" />
        </Svg>
      </Dock>
      <Dock><Chrome /></Dock>
      <Dock>
        <Svg s={32}>
          <rect x="6" y="1" width="14" height="22" rx="2" fill="#f4f4f4" />
          <rect x="9" y="5" width="8" height="8" fill="none" stroke="#d9402c" strokeDasharray="2 1.5" />
          <path d="M13 16l6 10M23 16l-6 10" stroke="#3f7fbf" strokeWidth="1.5" />
          <circle cx="15" cy="28" r="2.5" stroke="#3f7fbf" />
          <circle cx="22" cy="26" r="2.5" stroke="#3f7fbf" />
        </Svg>
      </Dock>
      <Dock>
        <Svg s={32}>
          <rect x="1" y="3" width="30" height="26" fill="#2bb8c4" />
          <path d="M6 18h8M17 18h9M6 23h20" stroke="#fff" strokeWidth="2" />
        </Svg>
      </Dock>
      <Dock dot>
        <Svg s={32}>
          <path d="M16 2a14 14 0 00-12 21L2 30l7.5-2A14 14 0 1016 2z" stroke="#1c9a55" strokeWidth="3" />
          <path d="M11 9c-3 3 0 8 3 11s7 4 9 1l-3-3-2 1c-2-1-4-3-5-5l1-2z" fill="#1c9a55" />
        </Svg>
      </Dock>
      <Dock>
        <div className="flex h-[32px] w-[28px] items-center justify-center rounded-[12px] bg-[#0f9ae8] text-[20px] font-bold leading-none text-white">S</div>
      </Dock>
      <Dock>
        <Svg s={32}>
          <circle cx="16" cy="16" r="14" fill="#2a9bd6" />
          <path d="M6 16l18-8-3 17-6-4-3 3-1-5z" fill="#fff" />
        </Svg>
      </Dock>
      <Dock>
        <Svg s={32}>
          <rect x="1" y="1" width="30" height="30" fill="#ef443b" />
          <path d="M11 16l4-4 4 4-4 4zM19 10l6 6-6 6-1.5-1.5 4.5-4.5-4.5-4.5z" fill="#fff" />
        </Svg>
      </Dock>
      <Dock dot>
        <Discord />
        <span className="absolute -right-[4px] -top-[5px] flex h-[17px] w-[17px] items-center justify-center rounded-full bg-[#ef6a6a]">
          <span className="h-[7px] w-[7px] rounded-full bg-white" />
        </span>
      </Dock>
      <Dock dot><VSCode /></Dock>
      <Dock dot>
        <Chrome />
        <span className="absolute -right-[4px] -top-[5px] flex h-[20px] w-[20px] items-center justify-center rounded-full bg-[#7f9f40] text-[11px] font-bold text-white">S</span>
      </Dock>
      <Dock dot>
        <Chrome />
        <span className="absolute -right-[4px] -top-[5px] flex h-[20px] w-[20px] items-center justify-center rounded-full bg-[#0d4a3e] text-[11px] font-bold text-white">S</span>
      </Dock>
      <Dock dot>
        <Svg s={32}>
          <rect x="6" y="2" width="24" height="28" rx="1" fill="#41a5ee" />
          <rect x="6" y="10" width="24" height="7" fill="#2b7cd3" />
          <rect x="6" y="17" width="24" height="7" fill="#185abd" />
          <rect x="6" y="24" width="24" height="6" fill="#103f91" />
          <rect x="1" y="9" width="15" height="15" fill="#185abd" />
          <text x="3.5" y="21" fontSize="12" fontWeight="700" fill="#fff" fontFamily="Open Sans">W</text>
        </Svg>
      </Dock>
      <Dock dot>
        <Svg s={32}>
          <rect x="2" y="2" width="28" height="28" rx="3" fill="#2a8fe0" />
          <path d="M2 28l10-15 7 10 4-5 7 10z" fill="#8fe0f5" />
          <path d="M2 28l10-15 4 6-7 11H5z" fill="#e85ba0" />
          <circle cx="23" cy="9" r="3" fill="#fff" />
        </Svg>
      </Dock>
      {/* tray */}
      <div className="ml-[84px] flex items-center text-[#111]">
        <Svg s={16} vb="0 0 16 16">
          <path d="M2 11l6-6 6 6" stroke="#111" strokeWidth="1.5" />
        </Svg>
        <div className="ml-[22px]">
          <Svg s={22} vb="0 0 22 22">
            <path d="M6 18a4 4 0 01-1-8 6 6 0 0111-1 4.5 4.5 0 011 9z" fill="#ddd" stroke="#333" strokeWidth="1.3" />
          </Svg>
        </div>
        <div className="ml-[17px]">
          <Svg s={22} vb="0 0 22 22">
            <rect x="8" y="2" width="6" height="11" rx="3" stroke="#1a6fd0" strokeWidth="1.4" />
            <path d="M5 10c0 4 3 6 6 6s6-2 6-6M11 16v5" stroke="#1a6fd0" strokeWidth="1.4" />
          </Svg>
        </div>
        <div className="ml-[17px]">
          <Svg s={22} vb="0 0 22 22">
            <path d="M2 8c5-5 13-5 18 0M5 11.5c3-3 9-3 12 0M8 15c1.5-1.5 4.5-1.5 6 0" stroke="#111" strokeWidth="1.4" />
            <circle cx="11" cy="18" r="1.5" fill="#111" />
          </Svg>
        </div>
        <div className="ml-[8px]">
          <Svg s={22} vb="0 0 22 22">
            <path d="M3 8h4l5-5v16l-5-5H3zM15 7c1 2 1 6 0 8M18 5c1.5 3 1.5 9 0 12" stroke="#111" strokeWidth="1.2" />
          </Svg>
        </div>
        <div className="ml-[9px]">
          <Svg s={22} vb="0 0 22 22">
            <rect x="5" y="7" width="14" height="11" rx="2" stroke="#111" strokeWidth="1.3" />
            <path d="M9 3L6 10h4l-2 5" stroke="#111" strokeWidth="1.3" />
          </Svg>
        </div>
        <div className="ml-[19px] flex w-[78px] flex-col items-end text-[15.5px] leading-[20px]">
          <span>6:21 PM</span>
          <span className="whitespace-nowrap">2025-02-10</span>
        </div>
        <div className="ml-[8px]">
          <Svg s={22} vb="0 0 22 22">
            <path d="M11 5a5 5 0 015 5v5l2 2H4l2-2v-5a5 5 0 015-5zM9 18.5a2 2 0 004 0z" fill="#222" />
            <path d="M15 2h4l-4 4h4" stroke="#222" />
          </Svg>
        </div>
      </div>
    </div>
  )
}

export default function App() {
  return (
    <div className="flex h-[1080px] w-[1920px] flex-col overflow-hidden bg-black">
      <TopBar />
      <div className="flex h-[963px]">
        <div className="flex w-[1440px] flex-col">
          <Gallery />
          <div className="flex h-[770px] bg-[#0b0b0b] pl-[35px]">
            <Screen />
          </div>
          <Toolbar />
        </div>
        <Chat />
      </div>
      <div className="h-px bg-black" />
      <Taskbar />
    </div>
  )
}
